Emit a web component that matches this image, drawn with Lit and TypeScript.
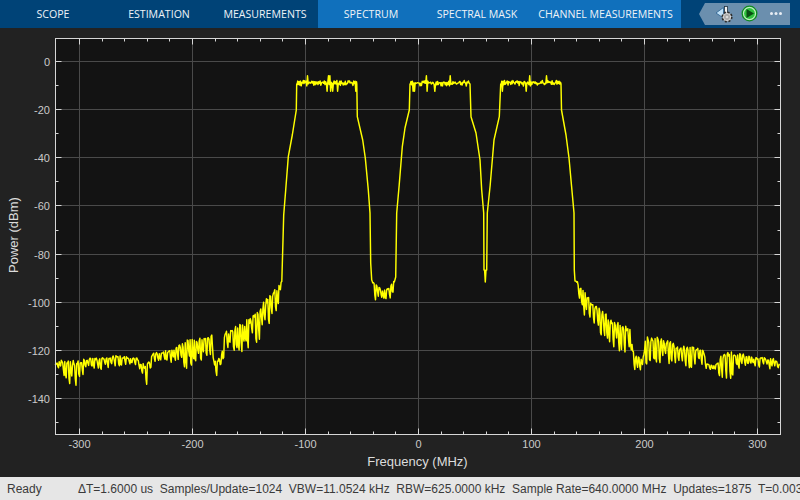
import { LitElement, html, css, svg } from "lit";
import { customElement } from "lit/decorators.js";

type Env = [number, number, number];

const leftEnv: Env[] = [
  [55, 364, 371], [60, 360, 368], [65, 360, 380], [70, 360, 384], [76, 360, 391], [80, 360, 377], [90, 358, 367],
  [100, 358, 370], [117, 355, 368], [137, 358, 365], [140, 363, 372], [145, 363, 390], [150, 360, 373],
  [153, 353, 362], [167, 350, 363], [187, 340, 367], [207, 337, 360], [212, 335, 357], [213, 357, 363],
  [217, 360, 378], [222, 353, 370], [225, 332, 352], [237, 325, 352], [250, 317, 347], [263, 302, 337],
  [277, 287, 308], [282, 280, 288],
];
const topEnv = (a: number, b: number): Env[] => [[a, 79, 86], [b, 79, 86]];
const floorEnv: Env[] = [
  [372, 280, 292], [375, 283, 299], [380, 288, 301], [385, 290, 300], [390, 285, 303], [395, 278, 292],
];
const rightEnv: Env[] = [
  [576, 281, 284], [578, 282, 300], [581, 284, 312], [593, 303, 330], [610, 317, 347], [630, 328, 353],
  [632.7, 350, 357], [635, 355, 372], [643, 357, 370], [646, 335, 370], [656.7, 337, 363], [666.7, 338, 365],
  [676.7, 345, 367], [693, 347, 367], [703, 348, 363], [706.7, 363, 372], [715, 365, 370], [723, 353, 383],
  [730, 350, 378], [740, 353, 370], [753, 357, 367], [773, 358, 369], [780, 365, 368],
];

const edge1: [number, number][] = [[283, 240], [283.7, 215], [285.7, 190], [288.3, 156.7], [292.3, 135], [296.3, 110], [296.7, 84]];
const edge2: [number, number][] = [[356.8, 84], [357.3, 116.7], [362.7, 140], [365.3, 158], [368.3, 190], [370, 213], [370.7, 263], [371.7, 280]];
const edge3: [number, number][] = [[395.7, 277], [396.7, 213], [399.2, 185], [402.3, 146.7], [405, 128], [409.3, 110], [410, 84]];
const edge4: [number, number][] = [[470, 84], [471, 116.7], [476, 133], [480, 160], [481.7, 190], [483.7, 213], [484, 270], [484.6, 270],
  [485.3, 282], [486, 270], [486.7, 270], [487.3, 213], [490.2, 185], [494, 140], [499.3, 116.7], [500.7, 84]];
const edge5: [number, number][] = [[561, 84], [561.5, 110], [566, 135], [569, 158], [571, 180], [574, 213], [574.3, 270], [575, 281]];

let seed = 20240611;
const rnd = () => {
  seed = (seed * 1664525 + 1013904223) >>> 0;
  return seed / 4294967296;
};

function noisy(env: Env[], comb: boolean): string[] {
  const pts: string[] = [];
  let seg = 0;
  let i = 0;
  let left = 0;
  let period = 4;
  let depth = 1;
  for (let x = env[0][0]; x <= env[env.length - 1][0]; x += 0.7, i++) {
    while (seg < env.length - 2 && x > env[seg + 1][0]) seg++;
    const [x0, t0, b0] = env[seg];
    const [x1, t1, b1] = env[seg + 1];
    const f = Math.min(1, (x - x0) / (x1 - x0));
    const t = t0 + (t1 - t0) * f;
    const b = b0 + (b1 - b0) * f;
    let r = rnd();
    if (comb) {
      if (left === 0) {
        period = 3 + Math.floor(rnd() * 4);
        depth = 0.55 + rnd() * 0.5;
        left = period;
      }
      const pos = period - left;
      if (pos === period - 1) r = depth;
      else if (pos === period - 2) r = depth * (0.6 + r * 0.35);
      else r = r * 0.22;
      left--;
    } else {
      r = i % 2 ? 0.2 + r * 0.45 : 0.4 + r * 0.6;
      if (rnd() < 0.07) r = r < 0.5 ? -0.45 : 1.75;
    }
    pts.push(`${x.toFixed(1)},${(t + (b - t) * r).toFixed(1)}`);
  }
  return pts;
}

const fmt = (a: [number, number][]) => a.map(([x, y]) => `${x},${y}`);

const tracePoints = [
  ...noisy(leftEnv, true), ...fmt(edge1),
  ...noisy(topEnv(297, 356.5), false), ...fmt(edge2),
  ...noisy(floorEnv, true), ...fmt(edge3),
  ...noisy(topEnv(410.3, 469.7), false), ...fmt(edge4),
  ...noisy(topEnv(501, 560.7), false), ...fmt(edge5),
  ...noisy(rightEnv, true),
].join(" ");

const L = 55.5, R = 780.5, T = 38.5, B = 434.5;
const xPos = (v: number) => Math.round(418 + v * 1.13) + 0.5;
const yPos = (v: number) => Math.round(61 - v * 2.4075) + 0.5;

const xMajor = [-300, -200, -100, 0, 100, 200, 300];
const yMajor = [0, -20, -40, -60, -80, -100, -120, -140];
const xMinor: number[] = [];
for (let v = -300; v <= 300; v += 20) if (v % 100 !== 0) xMinor.push(v);
const yMinor = [-10, -30, -50, -70, -90, -110, -130, -150];

const tabs = [
  { label: "SCOPE", active: false },
  { label: "ESTIMATION", active: false },
  { label: "MEASUREMENTS", active: false },
  { label: "SPECTRUM", active: true },
  { label: "SPECTRAL MASK", active: true },
  { label: "CHANNEL MEASUREMENTS", active: true, wide: true },
];

@customElement("app-root")
export class AppRoot extends LitElement {
  static styles = css`
    :host {
      display: flex;
      flex-direction: column;
      width: 800px;
      height: 500px;
      overflow: hidden;
      background: #222222;
    }
    .header {
      display: flex;
      height: 28px;
      background: #004377;
      flex: none;
    }
    .tab {
      width: 106px;
      display: flex;
      align-items: center;
      justify-content: center;
      color: #eef3f7;
      font: 10.6px "Open Sans", sans-serif;
      white-space: nowrap;
    }
    .tab.active {
      background: #1070bc;
    }
    .tab.wide {
      width: 151px;
    }
    .tools {
      margin: 3px 0 0 18px;
      width: 91px;
      height: 22px;
      flex: none;
    }
    .plot {
      flex: 1;
      display: block;
      width: 800px;
      min-height: 0;
    }
    .tick {
      fill: #cacaca;
      font: 11px "Liberation Sans", sans-serif;
    }
    .label {
      fill: #dcdcdc;
      font: 13px "Liberation Sans", sans-serif;
      text-anchor: middle;
    }
    .status {
      flex: none;
      height: 23px;
      box-sizing: border-box;
      padding-left: 7px;
      display: flex;
      align-items: center;
      background: #e6e6e6;
      color: #3a3a3a;
      font: 12px "Liberation Sans", sans-serif;
      white-space: pre;
      overflow: hidden;
    }
    .ready {
      width: 71px;
      flex: none;
    }
  `;

  private renderPlot() {
    return svg`
      <rect x=${L} y=${T} width=${R - L} height=${B - T} fill="#131313"></rect>
      ${xMajor.map((v) => svg`<line x1=${xPos(v)} x2=${xPos(v)} y1=${T} y2=${B} stroke="#4a4a4a"></line>`)}
      ${yMajor.map((v) => svg`<line x1=${L} x2=${R} y1=${yPos(v)} y2=${yPos(v)} stroke="#4a4a4a"></line>`)}
      <polyline points=${tracePoints} fill="none" stroke="#ffff00" stroke-width="1.45" stroke-linejoin="round"></polyline>
      <g stroke="#d6d6d6">
        <rect x=${L} y=${T} width=${R - L} height=${B - T} fill="none"></rect>
        ${xMajor.map((v) => svg`
          <line x1=${xPos(v)} x2=${xPos(v)} y1=${T} y2=${T + 6}></line>
          <line x1=${xPos(v)} x2=${xPos(v)} y1=${B} y2=${B - 6}></line>`)}
        ${xMinor.map((v) => svg`
          <line x1=${xPos(v)} x2=${xPos(v)} y1=${T} y2=${T + 3}></line>
          <line x1=${xPos(v)} x2=${xPos(v)} y1=${B} y2=${B - 3}></line>`)}
        ${yMajor.map((v) => svg`
          <line x1=${L} x2=${L + 6} y1=${yPos(v)} y2=${yPos(v)}></line>
          <line x1=${R} x2=${R - 6} y1=${yPos(v)} y2=${yPos(v)}></line>`)}
        ${yMinor.map((v) => svg`
          <line x1=${L} x2=${L + 3} y1=${yPos(v)} y2=${yPos(v)}></line>
          <line x1=${R} x2=${R - 3} y1=${yPos(v)} y2=${yPos(v)}></line>`)}
      </g>
      ${xMajor.map((v) => svg`<text class="tick" x=${xPos(v)} y="448" text-anchor="middle">${v}</text>`)}
      ${yMajor.map((v) => svg`<text class="tick" x="50" y=${yPos(v) + 4} text-anchor="end">${v}</text>`)}
      <text class="label" x="417.5" y="466">Frequency (MHz)</text>
      <text class="label" x="0" y="0" transform="translate(18 235) rotate(-90)">Power (dBm)</text>
    `;
  }

  private renderTools() {
    return html`<svg class="tools" viewBox="699 3 91 22" width="91" height="22">
      <polygon points="699,14 705,3 790,3 790,25 705,25" fill="#6b8fae"></polygon>
      <polygon points="716,13 723.5,7.5 723.5,18" fill="#bfe0f7" stroke="#2a5f8f" stroke-width="0.8"></polygon>
      <rect x="724.5" y="6.5" width="3" height="9" fill="#f4f4f4" stroke="#20303e" stroke-width="0.8"></rect>
      <circle cx="727" cy="17" r="4.6" fill="#9a9a9a" stroke="#2d2d2d" stroke-width="2" stroke-dasharray="2 1.6"></circle>
      <circle cx="727" cy="17" r="3.6" fill="#a9a9a9" stroke="#e4e4e4" stroke-width="0.8"></circle>
      <circle cx="727" cy="17" r="1.3" fill="#d8d8d8"></circle>
      <circle cx="749.5" cy="13.5" r="7.3" fill="#bdf0bd" stroke="#0f8a22" stroke-width="1.3"></circle>
      <circle cx="749.5" cy="13.5" r="5.4" fill="#2fc23d"></circle>
      <polygon points="746.5,9 746.5,18 754,13.5" fill="#0a4d14"></polygon>
      <g fill="#e8eef4">
        <circle cx="771.5" cy="13.5" r="1.5"></circle>
        <circle cx="776" cy="13.5" r="1.5"></circle>
        <circle cx="780.5" cy="13.5" r="1.5"></circle>
      </g>
    </svg>`;
  }

  render() {
    return html`
      <div class="header">
        ${tabs.map(
          (t) => html`<div class="tab ${t.active ? "active" : ""} ${t.wide ? "wide" : ""}">${t.label}</div>`
        )}
        ${this.renderTools()}
      </div>
      <svg class="plot" viewBox="0 28 800 449" width="800" height="449">${this.renderPlot()}</svg>
      <div class="status">
        <span class="ready">Ready</span>
        <span>ΔT=1.6000 us  Samples/Update=1024  VBW=11.0524 kHz  RBW=625.0000 kHz  Sample Rate=640.0000 MHz  Updates=1875  T=0.003000</span>
      </div>
    `;
  }
}
